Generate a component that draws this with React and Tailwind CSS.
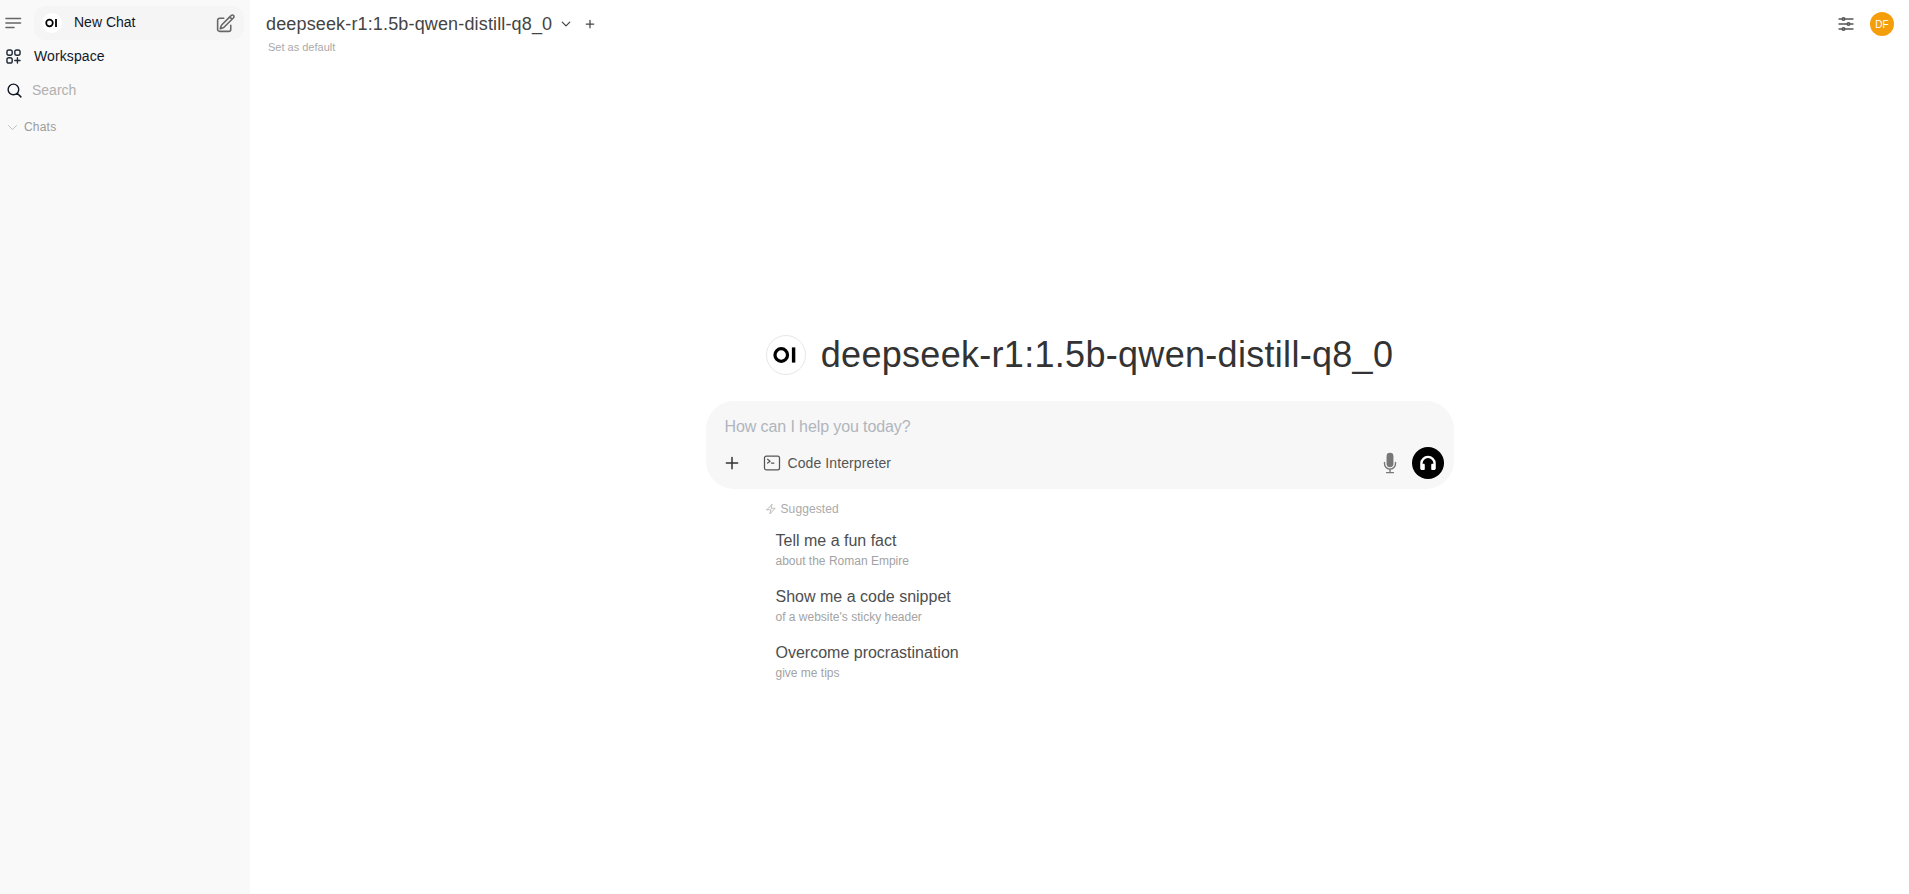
import {
  HiMicrophone,
  HiOutlineAdjustmentsHorizontal,
  HiOutlineBolt,
  HiOutlineChevronDown,
  HiOutlineCommandLine,
  HiOutlineMagnifyingGlass,
  HiOutlinePencilSquare,
  HiOutlinePlus,
} from 'react-icons/hi2';

const suggestions = [
  { title: 'Tell me a fun fact', sub: 'about the Roman Empire' },
  { title: 'Show me a code snippet', sub: "of a website's sticky header" },
  { title: 'Overcome procrastination', sub: 'give me tips' },
];

function OiLogo({ size }) {
  return (
    <svg width={size} height={size} viewBox="0 0 40 40" fill="none">
      <circle cx="15" cy="20" r="6.6" stroke="#000" strokeWidth="3.4" />
      <rect x="26.2" y="12" width="3.6" height="16" fill="#000" />
    </svg>
  );
}

function MenuIcon() {
  return (
    <svg width="18" height="18" viewBox="0 0 18 18" fill="none" stroke="#666" strokeWidth="1.6" strokeLinecap="round">
      <path d="M1 4.5h14.5M1 9h14.5M1 13.5h8" />
    </svg>
  );
}

function WorkspaceIcon() {
  return (
    <svg width="15" height="15" viewBox="0 0 16 16" fill="none" stroke="#1f2937" strokeWidth="1.5" strokeLinecap="round">
      <rect x="1" y="1" width="5.6" height="5.6" rx="2" />
      <rect x="9.4" y="1" width="5.6" height="5.6" rx="2" />
      <rect x="1" y="9.4" width="5.6" height="5.6" rx="2" />
      <path d="M12.2 9.4v5.6M9.4 12.2h5.6" />
    </svg>
  );
}

function HeadphonesIcon() {
  return (
    <svg width="20" height="20" viewBox="0 0 18 18" fill="#fff">
      <path d="M9 2.5A7 7 0 0 0 2 9.5v4.2c0 .9.7 1.6 1.6 1.6h1.5c.6 0 1-.4 1-1v-3.7c0-.6-.4-1-1-1H4.1v-.1a4.9 4.9 0 0 1 9.8 0v.1h-1c-.6 0-1 .4-1 1v3.7c0 .6.4 1 1 1h1.5c.9 0 1.6-.7 1.6-1.6V9.5a7 7 0 0 0-7-7z" />
    </svg>
  );
}

export default function App() {
  return (
    <div className="flex h-screen bg-white font-['Liberation_Sans',Arial,sans-serif] text-gray-700">
      <aside className="w-[250px] shrink-0 bg-[#f9f9f9] flex flex-col">
        <div className="flex items-center h-[34px] mt-1.5 pl-[5px] pr-1.5">
          <div className="w-[29px] shrink-0"><MenuIcon /></div>
          <div className="flex-1 h-[34px] rounded-xl bg-[#f5f5f5] flex items-center pl-2">
            <div className="w-5 h-5 rounded-full bg-white flex items-center justify-center">
              <OiLogo size={20} />
            </div>
            <span className="ml-3 mb-0.5 text-sm text-[#111827]">New Chat</span>
            <HiOutlinePencilSquare className="ml-auto mr-2 w-[21px] h-[21px] text-[#666]" strokeWidth={1.8} />
          </div>
        </div>
        <div className="flex items-center h-[34px] -mt-px pl-1.5">
          <WorkspaceIcon />
          <span className="ml-[13px] text-sm tracking-[0.1px] text-[#111827]">Workspace</span>
        </div>
        <div className="flex items-center h-[34px] pl-1.5">
          <HiOutlineMagnifyingGlass className="w-[17px] h-[17px] text-[#111827]" strokeWidth={2} />
          <span className="ml-[9px] text-sm text-[#b0b0b0]">Search</span>
        </div>
        <div className="flex items-center h-[20px] mt-[10px] pl-[6px]">
          <HiOutlineChevronDown className="w-[13px] h-[13px] text-[#b4b4b4]" />
          <span className="ml-[5px] text-xs tracking-[0.2px] font-medium text-[#9b9b9b]">Chats</span>
        </div>
      </aside>

      <main className="flex-1 flex flex-col min-w-0">
        <header className="flex items-start h-[60px] pl-4 pr-[15px]">
          <div className="pt-3.5">
            <div className="flex items-center h-5">
              <span className="text-lg tracking-[0.15px] text-[#444] leading-5">deepseek-r1:1.5b-qwen-distill-q8_0</span>
              <HiOutlineChevronDown className="ml-2 w-3 h-3 text-[#444]" strokeWidth={2.5} />
              <HiOutlinePlus className="ml-3 w-3 h-3 text-[#444]" strokeWidth={2.5} />
            </div>
            <div className="mt-[5px] pl-0.5 text-[11px] leading-4 text-[#aaa]">Set as default</div>
          </div>
          <div className="ml-auto flex items-center h-12 gap-3.5">
            <HiOutlineAdjustmentsHorizontal className="w-5 h-5 text-[#555]" strokeWidth={2} />
            <div className="w-6 h-6 rounded-full bg-[#f59e0b] text-white text-[10px] flex items-center justify-center">DF</div>
          </div>
        </header>

        <div className="w-[748px] mx-auto pt-[275px]">
          <div className="flex items-center justify-center h-10">
            <div className="w-10 h-10 rounded-full bg-white border border-gray-200 flex items-center justify-center">
              <OiLogo size={38} />
            </div>
            <h1 className="ml-[15px] text-4xl tracking-[0.3px] text-[#333] leading-10">deepseek-r1:1.5b-qwen-distill-q8_0</h1>
          </div>

          <div className="mt-[26px] h-[88px] rounded-[28px] bg-[#f7f7f7] pl-[19px] pr-[18px] pt-[14px]">
            <div className="text-base tracking-[-0.1px] leading-6 text-[#b0b5bd]">How can I help you today?</div>
            <div className="mt-3 flex items-center h-6">
              <HiOutlinePlus className="-ml-0.5 w-[18px] h-[18px] text-[#333]" strokeWidth={2} />
              <HiOutlineCommandLine className="ml-[21px] w-5 h-5 text-[#555]" />
              <span className="ml-1.5 text-sm tracking-[0.1px] text-[#555]">Code Interpreter</span>
              <HiMicrophone className="ml-auto w-[22px] h-[22px] text-[#777]" />
              <div className="ml-[11px] -mr-2 w-8 h-8 rounded-full bg-black flex items-center justify-center">
                <HeadphonesIcon />
              </div>
            </div>
          </div>

          <div className="mt-[12px] pl-[59px] flex items-center h-4 text-xs text-[#aaa]">
            <HiOutlineBolt className="w-3 h-3" />
            <span className="ml-1 tracking-[0.1px]">Suggested</span>
          </div>
          <div className="mt-3 pl-[70px] flex flex-col gap-3">
            {suggestions.map((s) => (
              <div key={s.title} className="h-11">
                <div className="text-base leading-6 text-[#4e4e4e]">{s.title}</div>
                <div className="text-xs leading-4 text-[#a3a3a3]">{s.sub}</div>
              </div>
            ))}
          </div>
        </div>
      </main>
    </div>
  );
}
